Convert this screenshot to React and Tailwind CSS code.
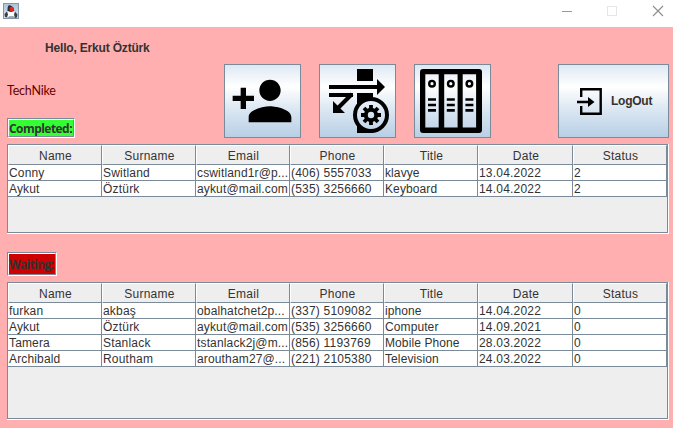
const columns = ['Name', 'Surname', 'Email', 'Phone', 'Title', 'Date', 'Status'];

const completed = [
  ['Conny', 'Switland', 'cswitland1r@p...', '(406) 5557033', 'klavye', '13.04.2022', '2'],
  ['Aykut', 'Öztürk', 'aykut@mail.com', '(535) 3256660', 'Keyboard', '14.04.2022', '2'],
];

const waiting = [
  ['furkan', 'akbaş', 'obalhatchet2p...', '(337) 5109082', 'iphone', '14.04.2022', '0'],
  ['Aykut', 'Öztürk', 'aykut@mail.com', '(535) 3256660', 'Computer', '14.09.2021', '0'],
  ['Tamera', 'Stanlack', 'tstanlack2j@m...', '(856) 1193769', 'Mobile Phone', '28.03.2022', '0'],
  ['Archibald', 'Routham', 'aroutham27@...', '(221) 2105380', 'Television', '24.03.2022', '0'],
];

const grid = 'grid w-[659px] grid-cols-[94px_94px_94px_94px_94px_95px_94px]';

const spacing = [
  'tracking-[0.15px]',
  'tracking-[0.2px]',
  'tracking-[0.15px]',
  'tracking-[0.2px]',
  'tracking-[0.1px]',
  'tracking-[0.2px]',
  'tracking-[0.2px]',
];

function Table({ rows, height }) {
  return (
    <div className={`w-[662px] border-r border-b border-white ${height}`}>
      <div className="h-full w-[661px] border border-[#7a8a99] bg-[#eeeeee]">
        <div className={grid}>
          {columns.map((c) => (
            <div
              key={c}
              className="h-5 border-t border-l border-r border-b border-t-white border-l-white border-r-[#7a8a99] border-b-[#7a8a99] pt-[2px] pl-px text-center text-[12px] leading-[16px] tracking-[0.25px]"
            >
              {c}
            </div>
          ))}
        </div>
        {rows.map((row) => (
          <div key={row[2]} className={grid}>
            {row.map((cell, i) => (
              <div
                key={i}
                className={`h-4 overflow-hidden border-r border-b border-[#7a8a99] bg-white pl-px text-[12px] leading-[16px] whitespace-nowrap ${spacing[i]}`}
              >
                {cell}
              </div>
            ))}
          </div>
        ))}
      </div>
    </div>
  );
}

function Tag({ children, className }) {
  return (
    <div className="w-fit border border-t-[#7a8a99] border-l-[#7a8a99] border-r-white border-b-white">
      <div className={`border border-t-white border-l-white border-r-[#7a8a99] border-b-[#7a8a99] font-bold whitespace-nowrap ${className}`}>
        {children}
      </div>
    </div>
  );
}

function Button({ children, className }) {
  return (
    <button
      className={`flex h-[74px] shrink-0 items-center border border-[#7a8a99] bg-[linear-gradient(180deg,#dde8f3_0%,#ffffff_30%,#dde8f3_60%,#b8cfe5_100%)] ${className}`}
    >
      {children}
    </button>
  );
}

function AddPersonIcon() {
  return (
    <svg width="64" height="64" viewBox="0 0 24 24">
      <path d="M15 12c2.21 0 4-1.79 4-4s-1.79-4-4-4-4 1.79-4 4 1.79 4 4 4zm-9-2V7H4v3H1v2h3v3h2v-3h3v-2H6zm9 4c-2.67 0-8 1.34-8 4v2h16v-2c0-2.66-5.33-4-8-4z" />
    </svg>
  );
}

function ProcessIcon() {
  return (
    <svg width="64" height="64" viewBox="0 0 64 64">
      <mask id="ring">
        <rect width="64" height="64" fill="#fff" />
        <circle cx="46" cy="46" r="15" fill="#000" />
      </mask>
      <path d="M32 0h16v12H32zM4 16h48v-6l8 8-8 8v-6H4zM4 24h24v4H4zM8 32v12h12z" />
      <path d="M32 24h16v40H32z" mask="url(#ring)" />
      <path d="M27 25L12 40" stroke="#000" strokeWidth="4" />
      <circle cx="46" cy="46" r="16" fill="none" stroke="#000" strokeWidth="4" />
      <circle cx="46" cy="46" r="5.2" fill="none" stroke="#000" strokeWidth="4" />
      <path
        d="M46 36v4M46 52v4M36 46h4M52 46h4M39 39l2.8 2.8M50.2 50.2L53 53M53 39l-2.8 2.8M41.8 50.2L39 53"
        stroke="#000"
        strokeWidth="3.8"
      />
    </svg>
  );
}

function ArchiveIcon() {
  return (
    <svg width="64" height="64" viewBox="0 0 64 64">
      <path
        fillRule="evenodd"
        d="M3 0h56a3 3 0 0 1 3 3v58a3 3 0 0 1-3 3H3a3 3 0 0 1-3-3V3a3 3 0 0 1 3-3zM5.3 5.2v53.2h13.4V5.2zM24.2 5.2v53.2h13.4V5.2zM42.7 5.2v53.2h13.4V5.2z"
      />
      {[12, 30.8, 49.4].map((x) => (
        <g key={x}>
          <circle cx={x} cy="14.7" r="2.8" fill="none" stroke="#000" strokeWidth="2.4" />
          <path d={`M${x - 4} 30.5h8M${x - 4} 36h8M${x - 4} 41.4h8`} stroke="#000" strokeWidth="2.7" />
        </g>
      ))}
    </svg>
  );
}

function ExitIcon() {
  return (
    <svg width="26" height="27" viewBox="0 0 26 27" className="shrink-0">
      <path d="M4.2 9V1.3h19.5v24.4H4.2V18" fill="none" stroke="#000" strokeWidth="2.4" />
      <path d="M0 12.8h11V9l6.500 5-6.500 5v-3.800H0z" />
    </svg>
  );
}

function DukeIcon() {
  return (
    <svg width="16" height="16" viewBox="0 0 16 16">
      <defs>
        <linearGradient id="duke" x1="0" y1="0" x2="0" y2="1">
          <stop offset="0" stopColor="#a9c1d8" />
          <stop offset="1" stopColor="#dbe6ef" />
        </linearGradient>
      </defs>
      <rect x=".5" y=".5" width="15" height="15" fill="url(#duke)" stroke="#8297ac" />
      <path d="M5 7L3.500 14l4.500.5 4.500-.5L11.500 7z" fill="#fff" />
      <path d="M5.500 2.500C8 1.500 10.500 4 11.500 8L8 9 4.500 8C4.500 5.500 4.500 3.500 5.500 2.500z" fill="#2a2f36" />
      <path d="M4 8.500L1.500 11l.5 3 2 .5 1-3zM12 8.500l2.500 3-.5 3-2 .5-1-3.500z" fill="#3a3f46" />
      <path d="M4 14.500l2.500-1h4l2 1z" fill="#555b62" />
      <circle cx="8.800" cy="6" r="2.300" fill="#e52620" />
    </svg>
  );
}

export default function App() {
  return (
    <div className="flex h-[428px] w-[673px] flex-col overflow-hidden bg-[#ffafaf] font-['Liberation_Sans',Arial,sans-serif] text-[#333333]">
      <header className="flex h-[27px] shrink-0 items-start justify-between bg-white pt-[3px] pl-[3px]">
        <DukeIcon />
        <svg width="112" height="20" viewBox="0 0 112 20" fill="none">
          <path d="M1 8.500h10" stroke="#999" />
          <rect x="46.500" y="3.500" width="9" height="9" stroke="#e6e6e6" />
          <path d="M92 3l10 10M102 3L92 13" stroke="#8c8c8c" strokeWidth="1.100" />
        </svg>
      </header>

      <main className="flex flex-col pl-[7px]">
        <section className="flex h-[111px] items-end">
          <div className="flex h-full w-[217px] flex-col">
            <h1 className="mt-[13px] ml-[38px] text-[12px] leading-4 font-bold tracking-[-0.18px] whitespace-nowrap">Hello, Erkut Öztürk</h1>
            <p className="mt-[26px] font-['Lato',sans-serif] text-[12.500px] leading-[18px] tracking-[-0.2px] text-[#660000]">TechNike</p>
            <div className="mt-auto">
              <Tag className="h-[18px] w-[66px] bg-[#33ff33] font-['Open_Sans',sans-serif] text-[12px] leading-[18px] tracking-[-0.55px]">Completed:</Tag>
            </div>
          </div>
          <Button className="w-[77px] justify-center pr-px">
            <AddPersonIcon />
          </Button>
          <Button className="ml-[18px] w-[77px] justify-center pr-px">
            <ProcessIcon />
          </Button>
          <Button className="ml-[18px] w-[77px] justify-center pr-px">
            <ArchiveIcon />
          </Button>
          <Button className="ml-[67px] w-[111px] pl-[18px]">
            <ExitIcon />
            <span className="ml-[8px] text-[12px] leading-4 font-bold tracking-[-0.25px]">LogOut</span>
          </Button>
        </section>

        <section className="mt-[6px]">
          <Table rows={completed} height="h-[90px]" />
        </section>

        <section className="mt-[18px]">
          <Tag className="h-[22px] w-[48px] bg-[#cc0000] font-['Open_Sans',sans-serif] text-[12px] leading-[22px] tracking-[-0.65px]">Waiting:</Tag>
          <div className="mt-[6px]">
            <Table rows={waiting} height="h-[138px]" />
          </div>
        </section>
      </main>
    </div>
  );
}
